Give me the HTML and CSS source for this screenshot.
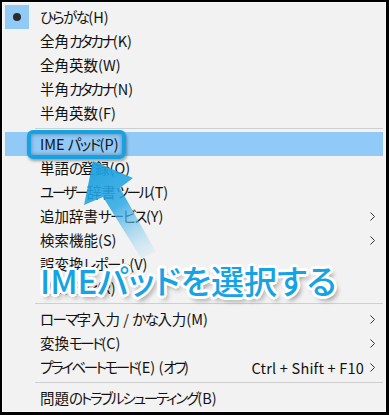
FILE: index.html
```html
<!DOCTYPE html>
<html lang="ja">
<head>
<meta charset="utf-8">
<link rel="stylesheet" href="styles.css">
</head>
<body>
<div class="frame">
  <div class="menu">
    <div class="item"><span class="check on"><span class="dot"></span></span><span class="label"><span class="k">ひらがな</span>(H)</span></div>
    <div class="item"><span class="check"></span><span class="label">全角<span class="k2">カタカナ</span>(K)</span></div>
    <div class="item"><span class="check"></span><span class="label">全角英数(W)</span></div>
    <div class="item"><span class="check"></span><span class="label">半角<span class="k2">カタカナ</span>(N)</span></div>
    <div class="item"><span class="check"></span><span class="label">半角英数(F)</span></div>
    <div class="sep"></div>
    <div class="item hover"><span class="check"></span><span class="label">IME <span class="k">パッド</span>(P)</span></div>
    <div class="item"><span class="check"></span><span class="label">単語<span class="k2">の</span>登録(O)</span></div>
    <div class="item"><span class="check"></span><span class="label"><span class="k2">ユーザー</span>辞書<span class="k2">ツール</span>(T)</span></div>
    <div class="item"><span class="check"></span><span class="label">追加辞書<span class="k">サービス</span>(Y)</span><svg class="chev" width="5" height="9" viewBox="0 0 5 9"><path d="M0.5 0.5 L4.5 4.5 L0.5 8.5" fill="none" stroke="#333" stroke-width="1"/></svg></div>
    <div class="item"><span class="check"></span><span class="label">検索機能(S)</span><svg class="chev" width="5" height="9" viewBox="0 0 5 9"><path d="M0.5 0.5 L4.5 4.5 L0.5 8.5" fill="none" stroke="#333" stroke-width="1"/></svg></div>
    <div class="item"><span class="check"></span><span class="label">誤変換<span class="k">レポート</span>(V)</span></div>
    <div class="item"><span class="check"></span><span class="label"><span class="k">プロパティ</span>(R)</span></div>
    <div class="sep"></div>
    <div class="item"><span class="check"></span><span class="label"><span class="k">ローマ</span>字入力 / <span class="k">かな</span>入力(M)</span><svg class="chev" width="5" height="9" viewBox="0 0 5 9"><path d="M0.5 0.5 L4.5 4.5 L0.5 8.5" fill="none" stroke="#333" stroke-width="1"/></svg></div>
    <div class="item"><span class="check"></span><span class="label">変換<span class="k2">モード</span>(C)</span><svg class="chev" width="5" height="9" viewBox="0 0 5 9"><path d="M0.5 0.5 L4.5 4.5 L0.5 8.5" fill="none" stroke="#333" stroke-width="1"/></svg></div>
    <div class="item"><span class="check"></span><span class="label"><span class="k2">プライベートモード</span>(E) (<span class="k2">オフ</span>)</span><span class="shortcut">Ctrl + Shift + F10</span><svg class="chev" width="5" height="9" viewBox="0 0 5 9"><path d="M0.5 0.5 L4.5 4.5 L0.5 8.5" fill="none" stroke="#333" stroke-width="1"/></svg></div>
    <div class="sep"></div>
    <div class="item"><span class="check"></span><span class="label">問題<span class="k3">のトラブルシューティング</span>(B)</span></div>
  </div>

  <div class="callout-box"></div>
  <svg class="arrow" width="389" height="415" viewBox="0 0 389 415">
    <defs>
      <linearGradient id="ag" x1="93" y1="163" x2="150" y2="258" gradientUnits="userSpaceOnUse">
        <stop offset="0" stop-color="#1a9fe0" stop-opacity="0.95"/>
        <stop offset="0.45" stop-color="#2aa8e4" stop-opacity="0.85"/>
        <stop offset="1" stop-color="#bfe4f6" stop-opacity="0.2"/>
      </linearGradient>
    </defs>
    <polygon points="93,161 133,178 120,188 156,252 141,258 103,197 84,205" fill="url(#ag)"/>
  </svg>
  <div class="caption">IMEパッドを選択する</div>
</div>
</body>
</html>
```
FILE: styles.css
```css
* { box-sizing: border-box; }
html, body { margin: 0; padding: 0; }
body {
  width: 389px;
  height: 415px;
  background: #000;
  font-family: "Noto Sans CJK JP", sans-serif;
  overflow: hidden;
}
.frame {
  position: relative;
  width: 389px;
  height: 415px;
  padding: 2px 3px 3px 2px;
}
.menu {
  height: 100%;
  background: #f2f2f2;
  border: 1px solid #f9f9f9;
  padding: 2px 2px 1px 2px;
  display: flex;
  flex-direction: column;
}
.item {
  height: 24px;
  display: flex;
  align-items: center;
  font-size: 14.5px;
  color: #111;
  font-feature-settings: "palt";
}
.item.hover { background: #91c9f7; }
.check {
  width: 24px;
  height: 24px;
  margin-right: 11px;
  display: flex;
  align-items: center;
  justify-content: center;
  flex: none;
}
.check.on { background: #91c9f7; }
.dot {
  width: 8px;
  height: 8px;
  border-radius: 50%;
  background: #2b2b2b;
}
.label { flex: 1; white-space: nowrap; line-height: 24px; }
.k { letter-spacing: -1.6px; }
.k2 { letter-spacing: -2.4px; }
.k3 { letter-spacing: -2.1px; }
.shortcut { margin-right: 6px; white-space: nowrap; letter-spacing: 0.2px; }
.chev { margin-right: 8px; flex: none; }
.sep {
  height: 7px;
  display: flex;
  align-items: center;
  padding-left: 30px;
}
.sep::before {
  content: "";
  display: block;
  flex: 1;
  height: 1px;
  background: #cfcfcf;
}
.callout-box {
  position: absolute;
  left: 27px;
  top: 130px;
  width: 99px;
  height: 29px;
  border: 4px solid #16a2e2;
  border-radius: 6px;
  box-shadow: inset 0 0 4px rgba(0,0,0,0.35), 1px 2px 3px rgba(0,0,0,0.35);
}
.arrow {
  position: absolute;
  left: 0;
  top: 0;
}
.caption {
  position: absolute;
  left: 40px;
  top: 256px;
  font-family: "Noto Sans CJK JP", sans-serif;
  font-feature-settings: "palt";
  font-size: 33px;
  font-weight: 500;
  line-height: 48px;
  white-space: nowrap;
  color: #16a3e3;
  text-shadow:
    2px 0 0 #fff, -2px 0 0 #fff, 0 2px 0 #fff, 0 -2px 0 #fff,
    2px 2px 0 #fff, -2px -2px 0 #fff, 2px -2px 0 #fff, -2px 2px 0 #fff,
    3px 0 0 #fff, -3px 0 0 #fff, 0 3px 0 #fff, 0 -3px 0 #fff,
    3px 4px 5px rgba(0,0,0,0.45);
}
```
